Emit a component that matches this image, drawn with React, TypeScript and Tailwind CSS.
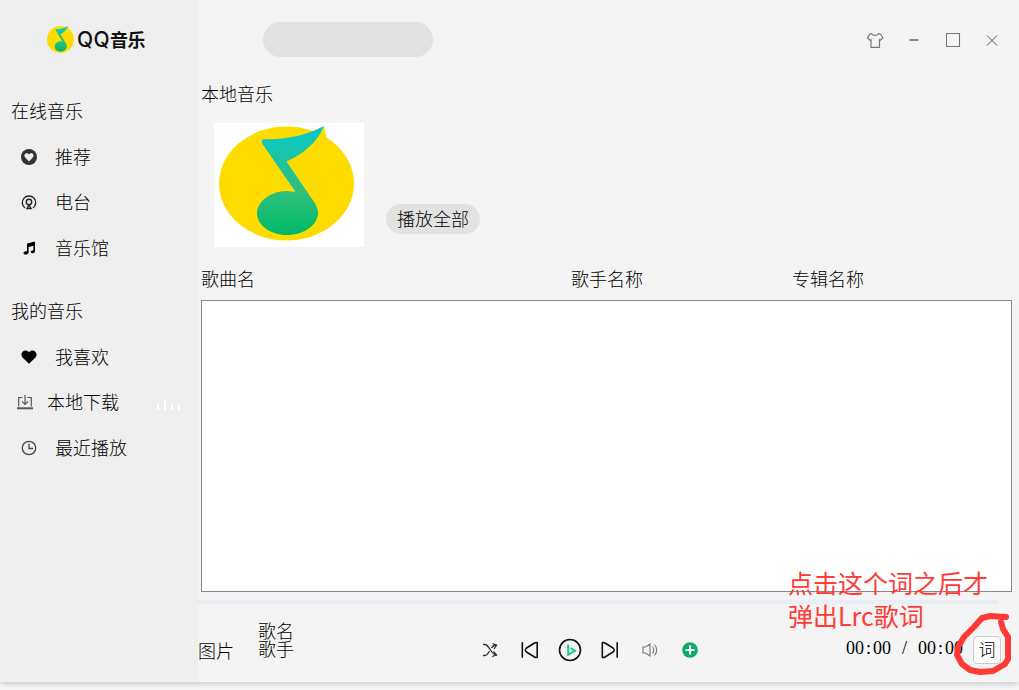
import type { ReactNode } from "react";

function Logo({ id, className }: { id: string; className: string }) {
  return (
    <svg viewBox="0 0 135 115" preserveAspectRatio="none" className={className}>
      <defs>
        <linearGradient id={id} x1="0" y1="0" x2="0" y2="1">
          <stop offset="0" stopColor="#08c8cc" />
          <stop offset="0.6" stopColor="#30c07c" />
          <stop offset="1" stopColor="#00b968" />
        </linearGradient>
      </defs>
      <ellipse cx="67.5" cy="57.500" rx="67.5" ry="57" fill="#ffdc00" />
      <path d="M92 8 L105 0 L108 14 L104 20Z" fill="#ffdc00" />
      <path
        d="M45 13.300C67 13.800 88 9 105 0C98 17 84 28 67.500 35.500L96.500 78C98 81 99 84 99 87C99 99 85 109 68 109S38 99 38 87.500S51 65 68 65L76.500 66L43.500 18C42 15 43 13.300 45 13.300Z"
        fill={`url(#${id})`}
      />
    </svg>
  );
}

function NavItem({ icon, label, wide }: { icon: ReactNode; label: string; wide?: boolean }) {
  return (
    <div className="flex h-[45.5px] items-center">
      <div className={wide ? "flex w-[47px] pl-4 pt-[2px]" : "flex w-[55px] pl-5"}>{icon}</div>
      <span className="pb-[2px]">{label}</span>
      {wide && (
        <div className="ml-[38px] mt-[6px] flex items-end gap-[5px]">
          <i className="h-[6px] w-[2px] bg-white" />
          <i className="h-[10px] w-[2px] bg-white" />
          <i className="h-[5px] w-[2px] bg-white" />
          <i className="h-[5px] w-[2px] bg-white" />
        </div>
      )}
    </div>
  );
}

const icon = "size-[18px]";

function Sidebar() {
  return (
    <aside className="w-[198px] shrink-0 bg-[#efefef]">
      <div className="flex h-[88px] items-start pl-[47px] pt-[26px]">
        <Logo id="logoSmall" className="h-[27px] w-[27px]" />
        <div className="ml-[3px] flex h-[27px] items-center text-[#111]">
          <span className="font-[Inter] text-[21px] font-medium tracking-[0.3px]">QQ</span>
          <span className="pb-[2px] text-[18px] font-bold tracking-[-0.3px]">音乐</span>
        </div>
      </div>

      <div className="flex h-[46px] items-center pb-[2px] pl-[11px]">在线音乐</div>
      <NavItem
        label="推荐"
        icon={
          <svg viewBox="0 0 18 18" className={icon}>
            <circle cx="9" cy="9" r="8" fill="#333" />
            <path d="M9 13.500L5.200 9.600C2.600 6.400 7 3.400 9 6.500C11 3.400 15.400 6.400 12.800 9.600Z" fill="#efefef" />
          </svg>
        }
      />
      <NavItem
        label="电台"
        icon={
          <svg viewBox="0 0 18 18" className={icon} fill="none" stroke="#222" strokeWidth="1.400">
            <path d="M5 15A6.700 6.700 0 1 1 13 15" />
            <circle cx="9" cy="9" r="2.700" />
            <path d="M9 12L7 15.500H11Z" />
          </svg>
        }
      />
      <NavItem
        label="音乐馆"
        icon={
          <svg viewBox="0 0 18 18" className={icon}>
            <path
              d="M7 4.500L15 2.600V12C15 13.600 13.800 14.200 12.500 14.200C10 14.200 10.200 11.200 13.400 11.200V6.800L8.600 7.900V13.400C8.600 15.800 3.500 16.200 3.500 13.900C3.500 12.600 5 12.100 7 12.200Z"
              fill="#000"
            />
          </svg>
        }
      />

      <div className="mt-[17.5px] flex h-[46px] items-center pb-[2px] pl-[11px]">我的音乐</div>
      <NavItem
        label="我喜欢"
        icon={
          <svg viewBox="0 0 18 18" className={icon}>
            <path d="M9 15.800L2.500 9.500C-1.200 4.700 5.500-.200 9 4.300C12.500-.200 19.200 4.700 15.500 9.500Z" fill="#000" />
          </svg>
        }
      />
      <NavItem
        wide
        label="本地下载"
        icon={
          <svg viewBox="0 0 18 18" className={icon} fill="none" stroke="#555" strokeWidth="1.200">
            <path d="M6.500 3.500H2.700V12.500M11.500 3.500H15.300V12.500M9 1V10M6 7.300L9 10.300L12 7.300" />
            <path d="M1 14.300H17" strokeWidth="2" />
          </svg>
        }
      />
      <NavItem
        label="最近播放"
        icon={
          <svg viewBox="0 0 18 18" className={icon} fill="none" stroke="#444" strokeWidth="1.300">
            <circle cx="9" cy="9" r="6.700" />
            <path d="M9 4.500V9.500H13" />
          </svg>
        }
      />
    </aside>
  );
}

function TitleBar() {
  return (
    <header className="flex h-[79px] items-start justify-between pl-[65px] pr-[17px] pt-[22px]">
      <div className="h-[35px] w-[170px] rounded-full bg-[#e2e2e2]" />
      <svg viewBox="0 0 136 18" className="mt-[10px] h-[18px] w-[136px]" fill="none" stroke="#777">
        <path d="M5.500 1.700C6.500 4 11.500 4 12.500 1.700L14.500 2L17 6L14 8.500L13.500 7.800V15.300H5V7.800L4.200 8.500L1.500 6L4 2Z" strokeWidth="1.200" />
        <path d="M43.500 8H52.500" strokeWidth="1.700" />
        <path d="M80.500 1.500H93.500V14.500H80.500Z" strokeWidth="1.100" />
        <path d="M121 3.500L131 13.500M131 3.500L121 13.500" stroke="#555" />
      </svg>
    </header>
  );
}

function Colon() {
  return <span className="inline-block w-[9px] text-center">:</span>;
}

function PlayerBar() {
  return (
    <footer className="flex h-[78px]">
      <div className="w-[60px] pt-[37px] leading-[18px]">图片</div>
      <div className="w-[223px] pt-[17px] leading-[18px]">
        <p>歌名</p>
        <p>歌手</p>
      </div>
      <svg viewBox="0 0 220 28" className="mt-[32px] h-7 w-[220px]" fill="none" stroke="#111" strokeWidth="1.600">
        <g stroke="#333" strokeWidth="1.300">
          <path d="M2 8.500H4C8 8.500 10.500 19 15 19H15.500M2 19.500H4C6 19.500 7.300 17 8.500 15M10.500 12C11.700 10 13 9 15.500 9" />
          <path d="M11.500 7.500L15.500 9.300L13 13M12.500 15.500L15.500 19L11 20.500" />
        </g>
        <path d="M41.300 6.300V21.700M56.200 7V21C56.200 21.800 54.500 21.500 53.500 21L45.500 16C44 14.800 44 13.200 45.500 12L53.500 7C54.500 6.300 56.200 6.200 56.200 7Z" />
        <circle cx="89" cy="14" r="10.500" />
        <path d="M87.200 8.500V18.700L94 14.800L89.500 12" stroke="#20c794" strokeWidth="2" />
        <path d="M136.200 6.300V21.700M121.300 7V21C121.300 21.800 123 21.500 124 21L132 16C133.500 14.800 133.500 13.200 132 12L124 7C123 6.300 121.300 6.200 121.300 7Z" />
        <path d="M162 11H164.500L169 8V20L164.500 17H162ZM171.500 10.500Q174 14 171.500 17.500M173.500 8.500Q178 14 173.500 19.500" stroke="#777" strokeWidth="1.100" />
        <circle cx="209" cy="14" r="7.800" fill="#0cab66" stroke="none" />
        <path d="M204.500 14H213.500M209 9.500V18.500" stroke="#fff" strokeWidth="2" />
      </svg>
      <div className="ml-[145px] mt-[31px] w-[127px] whitespace-nowrap font-['Liberation_Serif',serif] text-[18px] font-normal leading-[26px]">
        00
        <Colon />
        00
        <span className="inline-block w-[27px] text-center">/</span>
        00
        <Colon />
        00
      </div>
      <div className="mt-[32px] flex h-7 w-7 items-center justify-center rounded border border-[#ccc] bg-[#fdfdfd] pb-[2px] text-[17px]">
        词
      </div>
    </footer>
  );
}

export default function App() {
  return (
    <div className="relative h-[690px] w-[1019px] overflow-hidden bg-[#f8f8f8] font-['Noto_Sans_CJK_SC',sans-serif] text-[18px] font-light leading-[18px] text-black">
      <div className="flex h-[682px] bg-[#f4f4f4] shadow-[0_1px_7px_rgba(0,0,0,0.25)]">
        <Sidebar />
        <main className="min-w-0 flex-1">
          <TitleBar />
          <h1 className="h-11 pl-[3px] pt-[5px]">本地音乐</h1>
          <div className="flex pl-4">
            <div className="h-[124px] w-[150px] bg-white pl-[5px] pt-[3px]">
              <Logo id="logoLarge" className="h-[115px] w-[135px]" />
            </div>
            <button className="ml-[22px] mt-[81px] h-[30px] w-[94px] rounded-full bg-[#e2e2e2] pb-[3px]">播放全部</button>
          </div>
          <div className="flex h-[53px] pl-[3px] pt-[22px]">
            <span className="w-[370px]">歌曲名</span>
            <span className="w-[221px]">歌手名称</span>
            <span>专辑名称</span>
          </div>
          <div className="ml-[3px] h-[292px] w-[811px] border border-[#828790] bg-white" />
          <div className="mt-2 h-1 w-[800px] bg-[#e9edf6]" />
          <PlayerBar />
        </main>
      </div>

      <p className="absolute left-[788px] top-[566px] w-[210px] text-[25px] font-normal leading-[33px] text-[#ff3b36]">
        点击这个词之后才
        <br />
        弹出Lrc歌词
      </p>
      <svg
        viewBox="0 0 65 65"
        className="absolute left-[950px] top-[610px] size-[65px]"
        fill="none"
        stroke="#ff3936"
        strokeWidth="6"
        strokeLinecap="round"
        strokeLinejoin="round"
      >
        <path d="M56 7L40 6L32 8L24 17L14 27L8 37L7 45L12 54L20 60L30 62L43 61L55 54L58 49V27L53 19L51 12" />
      </svg>
    </div>
  );
}
